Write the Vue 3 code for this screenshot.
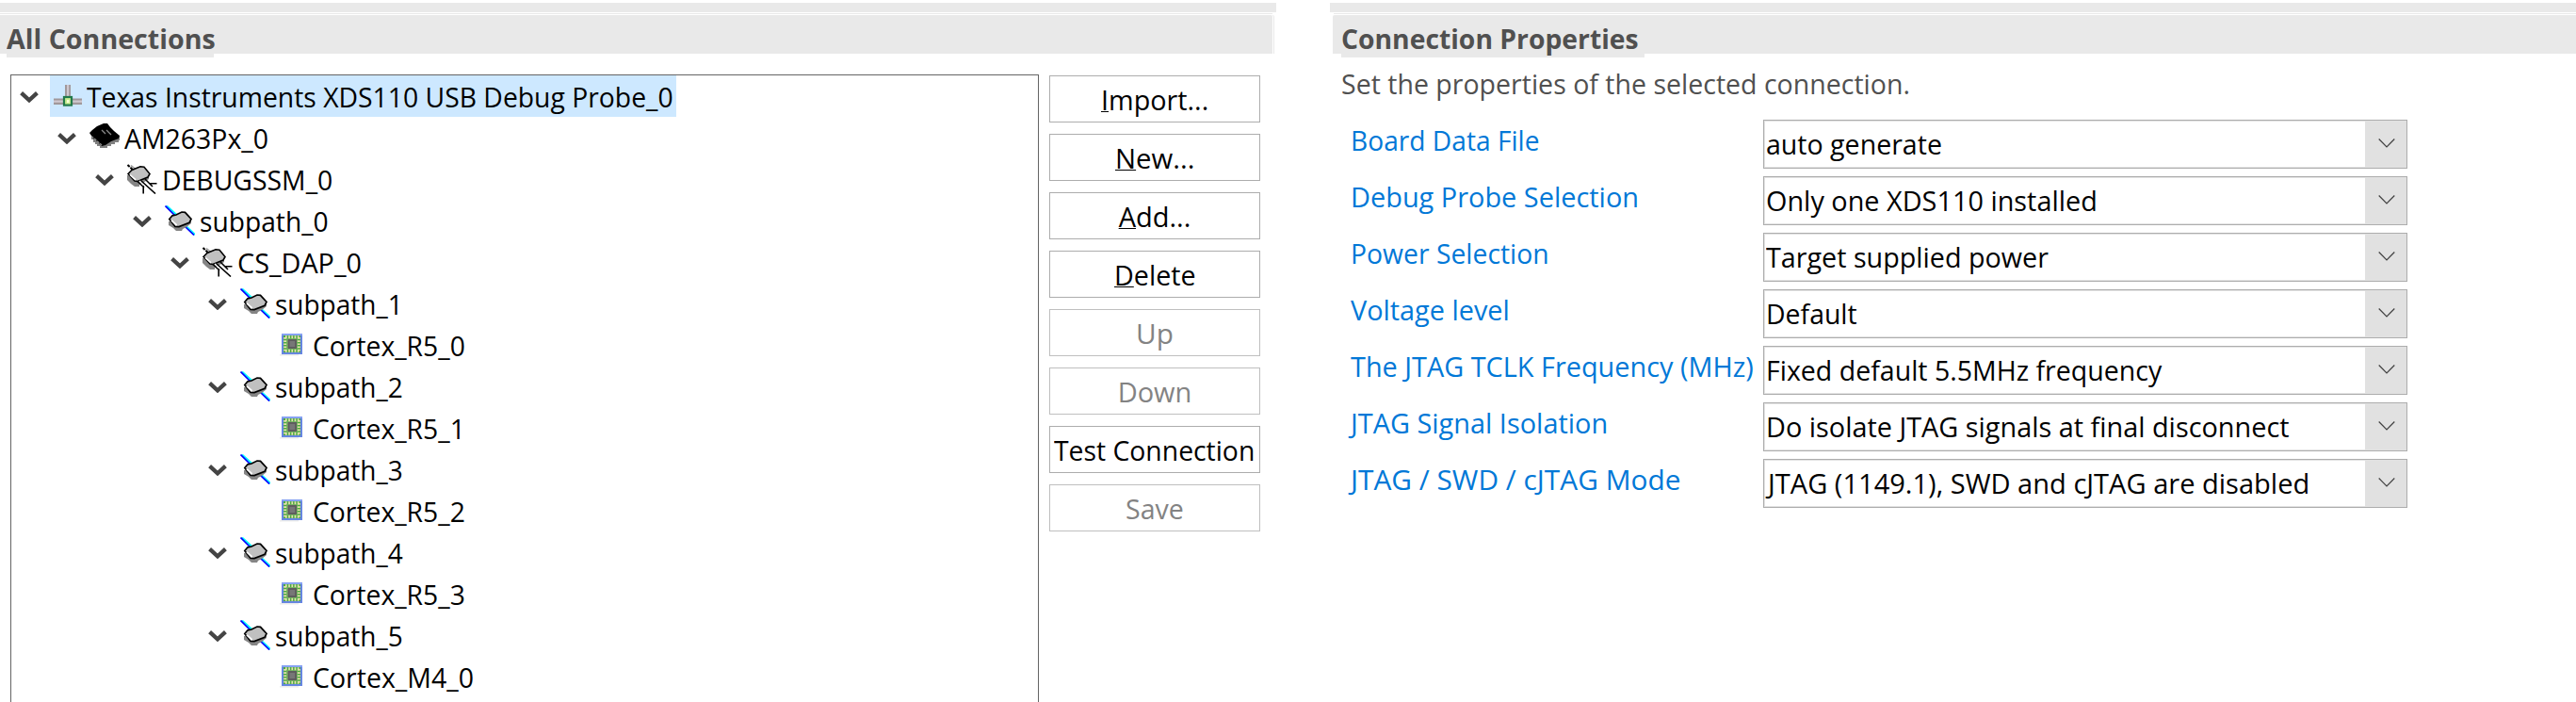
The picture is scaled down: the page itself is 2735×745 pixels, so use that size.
<script setup>
// Tree rows: label, nesting depth, icon kind and label width in pixels
const nodes = [
  { label: 'Texas Instruments XDS110 USB Debug Probe_0', depth: 0, icon: 'probe', width: 623 },
  { label: 'AM263Px_0', depth: 1, icon: 'device', width: 153 },
  { label: 'DEBUGSSM_0', depth: 2, icon: 'router', width: 181 },
  { label: 'subpath_0', depth: 3, icon: 'path', width: 137 },
  { label: 'CS_DAP_0', depth: 4, icon: 'router', width: 132 },
  { label: 'subpath_1', depth: 5, icon: 'path', width: 136 },
  { label: 'Cortex_R5_0', depth: 6, icon: 'cpu', width: 162 },
  { label: 'subpath_2', depth: 5, icon: 'path', width: 136 },
  { label: 'Cortex_R5_1', depth: 6, icon: 'cpu', width: 162 },
  { label: 'subpath_3', depth: 5, icon: 'path', width: 136 },
  { label: 'Cortex_R5_2', depth: 6, icon: 'cpu', width: 162 },
  { label: 'subpath_4', depth: 5, icon: 'path', width: 136 },
  { label: 'Cortex_R5_3', depth: 6, icon: 'cpu', width: 162 },
  { label: 'subpath_5', depth: 5, icon: 'path', width: 136 },
  { label: 'Cortex_M4_0', depth: 6, icon: 'cpu', width: 171 },
]

const buttons = [
  { key: 'I', rest: 'mport...', width: 114 },
  { key: 'N', rest: 'ew...', width: 84 },
  { key: 'A', rest: 'dd...', width: 77 },
  { key: 'D', rest: 'elete', width: 87 },
  { key: '', rest: 'Up', width: 40, disabled: true },
  { key: '', rest: 'Down', width: 79, disabled: true },
  { key: '', rest: 'Test Connection', width: 213 },
  { key: '', rest: 'Save', width: 62, disabled: true },
]

const fields = [
  { label: 'Board Data File', lw: 200, value: 'auto generate', vw: 187 },
  { label: 'Debug Probe Selection', lw: 306, value: 'Only one XDS110 installed', vw: 352 },
  { label: 'Power Selection', lw: 211, value: 'Target supplied power', vw: 300 },
  { label: 'Voltage level', lw: 169, value: 'Default', vw: 97 },
  { label: 'The JTAG TCLK Frequency (MHz)', lw: 428, value: 'Fixed default 5.5MHz frequency', vw: 420 },
  { label: 'JTAG Signal Isolation', lw: 273, value: 'Do isolate JTAG signals at final disconnect', vw: 556 },
  { label: 'JTAG / SWD / cJTAG Mode', lw: 350, value: 'JTAG (1149.1), SWD and cJTAG are disabled', vw: 575, hang: true },
]

// Condenses a label's glyphs so that it fills the given width
const vFit = {
  mounted(el, { value }) {
    const natural = el.offsetWidth
    el.style.transform = `scaleX(${value / natural})`
    el.style.marginRight = `${value - natural}px`
  },
}
</script>

<template>
  <main class="editor">
    <section class="panel connections">
      <div class="strip"></div>
      <div class="hairline"></div>
      <header class="bar"><h2 class="title"><span v-fit="222" class="text">All Connections</span></h2></header>
      <div class="body">
        <div class="tree">
          <div
            v-for="(node, i) in nodes"
            :key="node.label"
            class="row"
            :style="{ paddingLeft: node.depth * 40 + 'px' }"
          >
            <svg class="chevron" width="20" height="12" viewBox="0 0 20 12">
              <path v-if="node.icon !== 'cpu'" d="M1.6 1.6 L10 9.4 L18.4 1.6" fill="none" stroke="#444" stroke-width="4.2" />
            </svg>
            <div class="item" :class="{ selected: i === 0 }">
              <svg class="icon" width="32" height="32" viewBox="0 0 32 32">
                <g v-if="node.icon === 'probe'">
                  <path d="M14 4h6v13h-6zM2 18.5h30v6.5h-30z" fill="#a1989b" />
                  <path d="M16 4h2.2v13h-2.2zM2 20.5h30v2.2h-30z" fill="#cfc8d0" />
                  <rect x="13" y="17" width="8" height="8.6" fill="#c7ee91" stroke="#237a4b" stroke-width="2.2" />
                  <rect x="16" y="20" width="2.4" height="3" fill="#f8ffd8" />
                </g>
                <g v-else-if="node.icon === 'device'">
                  <path d="M0 12h2v6h2v3h2v2h2v2h3v2h8v-2h4v-2h4v-2h4v-2h3v-4L20 8z" fill="#808080" />
                  <path d="M0 11L3 8L8 4L15 1L19 1L22 5L26 9L32 14L31 17L23 20L17 24L13 25L8 20L4 17z" fill="#000" />
                  <path d="M2 14.5L13 24" fill="none" stroke="#8a8a8a" stroke-width="1.4" stroke-dasharray="3 1" />
                  <path d="M13 8l4 4M18 8l5 5" fill="none" stroke="#8a8a8a" stroke-width="1.3" />
                </g>
                <g v-else-if="node.icon === 'router'">
                  <path d="M0.5 1L9 9" stroke="#000" stroke-width="2" stroke-dasharray="3 1" />
                  <path d="M4 1.5L10 6.5" stroke="#999" stroke-width="1.6" />
                  <path d="M0 12v5l4 4 4 3h5v-2l4-2 6-4v-5z" fill="#858585" />
                  <path d="M1 10.5L5 6.5L14 2.8L18 3.2L24 10.5L22 14L11 18.5L8 18z" fill="#c0c0c0" stroke="#000" stroke-width="1.6" />
                  <path d="M3 11.5L9 16.8" stroke="#fff" stroke-width="1.6" />
                  <path d="M13 18L28 31.5" stroke="#fff" stroke-width="1.6" />
                  <path d="M11 18.5L18 25M15 18L30 31.5M19 16L27 24M17.2 23v8.5M24.5 20.8h7" fill="none" stroke="#000" stroke-width="1.6" />
                </g>
                <g v-else-if="node.icon === 'path'">
                  <path d="M2 0.5L12 9.5M22.5 22L32 31" stroke="#0ff" stroke-width="2" />
                  <path d="M0.5 0.5L10.5 10.5M21 22L31 31.5" stroke="#00f" stroke-width="1.7" />
                  <path d="M4 17v4l5 3 3 3h6l1-2 4-2 5-4v-5z" fill="#858585" />
                  <path d="M4.8 14.5L8 10.8L12 10L18 7L21.5 7.4L28 14.5L26 18.4L15 22.6L11 22.4z" fill="#c0c0c0" stroke="#000" stroke-width="1.7" />
                  <path d="M7 15.8L12.6 21" stroke="#fff" stroke-width="1.8" />
                </g>
                <g v-else>
                  <rect x="2" y="26" width="20" height="1.5" fill="#ececec" />
                  <rect x="4" y="4" width="22" height="22" fill="#6686e0" />
                  <rect x="4" y="4" width="22" height="2" fill="#86a2f2" />
                  <rect x="6" y="6" width="18" height="18" fill="#4dab43" />
                  <path d="M8 7.7h15M8 22.3h15M7.7 8v15M22.3 8v15" fill="none" stroke="#e6dfb0" stroke-width="3" stroke-dasharray="1.7 1.5" />
                  <rect x="9.5" y="9.5" width="11" height="11" fill="#8dbb72" />
                  <rect x="10.5" y="10" width="9.5" height="10" fill="#5e5e5e" />
                  <rect x="12.5" y="12" width="5.5" height="6" fill="#777" />
                </g>
              </svg>
              <span v-fit="node.width" class="text">{{ node.label }}</span>
            </div>
          </div>
        </div>
        <div class="buttons">
          <button v-for="b in buttons" :key="b.rest" class="btn" :disabled="b.disabled">
            <span v-fit="b.width" class="text"><span class="mnemonic">{{ b.key }}</span>{{ b.rest }}</span>
          </button>
        </div>
      </div>
    </section>

    <section class="panel properties">
      <div class="strip"></div>
      <div class="hairline"></div>
      <header class="bar"><h2 class="title"><span v-fit="316" class="text">Connection Properties</span></h2></header>
      <p class="hint"><span v-fit="604" class="text">Set the properties of the selected connection.</span></p>
      <div class="form">
        <div v-for="f in fields" :key="f.label" class="field">
          <div class="label"><span v-fit="f.lw" class="text">{{ f.label }}</span></div>
          <div class="combo">
            <div class="value" :class="{ hang: f.hang }"><span v-fit="f.vw" class="text">{{ f.value }}</span></div>
            <div class="drop">
              <svg width="18" height="10" viewBox="0 0 18 10">
                <path d="M0.7 0.5 L9 9 L17.3 0.5" fill="none" stroke="#404040" stroke-width="1.2" />
              </svg>
            </div>
          </div>
        </div>
      </div>
    </section>
  </main>
</template>

<style>
body {
  background: #fff;
  overflow: hidden;
}
</style>

<style scoped>
* {
  box-sizing: border-box;
}
.editor {
  display: flex;
  gap: 57px;
  width: 2735px;
  height: 745px;
  overflow: hidden;
  background: #fff;
  color: #000;
  font-family: 'Open Sans', 'Noto Sans', sans-serif;
  font-size: 29px;
}
.text {
  display: inline-block;
  white-space: pre;
  transform-origin: 0 50%;
}
.panel {
  padding-top: 3px;
  height: 745px;
}
.connections {
  width: 1355px;
  flex: none;
}
.properties {
  flex: 1;
}
.strip {
  height: 10px;
  background: #e9e9e9;
}
.hairline {
  height: 1px;
  margin: 1px 4px 1px 0;
  background: #e9e9e9;
}
.properties .hairline {
  margin: 1px 0 1px 4px;
}
.bar {
  height: 41px;
  width: 1351px;
  background: #e9e9e9;
  box-shadow: 1px 0 0 #fff, 2px 0 0 #e9e9e9;
  padding-left: 7px;
  border-top-right-radius: 2px;
}
.properties .bar {
  width: auto;
  margin-left: 3px;
  padding-left: 9px;
  box-shadow: none;
  border-radius: 2px 0 0 0;
}
.title {
  margin: 0;
  width: 220px;
  height: 45px;
  background: #e9e9e9;
  color: #505050;
  font-size: 29px;
  font-weight: 700;
  line-height: 50px;
  white-space: nowrap;
}
.properties .title {
  width: 322px;
}
.body {
  display: flex;
  gap: 11px;
  padding: 22px 0 0 11px;
}
.tree {
  width: 1092px;
  height: 700px;
  border: 1px solid #646464;
}
.row {
  display: flex;
  height: 44px;
}
.chevron {
  flex: none;
  margin: 17px 12px 0 9px;
}
.item {
  display: flex;
  height: 44px;
  padding: 0 3px 0 2px;
  line-height: 46px;
  white-space: nowrap;
}
.selected {
  background: #cde8ff;
}
.icon {
  flex: none;
  margin: 6px 5px 0 0;
}
.buttons {
  display: flex;
  flex-direction: column;
  gap: 12px;
  padding-top: 1px;
}
.btn {
  display: flex;
  justify-content: center;
  align-items: flex-start;
  width: 224px;
  height: 50px;
  padding: 0;
  border: 1px solid #adadad;
  background: #fff;
  color: #000;
  font: inherit;
  line-height: 50px;
}
.btn:disabled {
  border-color: #bfbfbf;
  color: #838383;
}
.mnemonic {
  text-decoration: underline;
  text-decoration-thickness: 1px;
  text-underline-offset: 1px;
  text-decoration-skip-ink: none;
}
.hint {
  margin: 10px 0 0 12px;
  height: 60px;
  line-height: 44px;
  color: #505050;
}
.form {
  display: grid;
  row-gap: 11px;
  padding-left: 22px;
}
.field {
  display: grid;
  grid-template-columns: 438px 684px;
  height: 49px;
}
.label {
  line-height: 44px;
  color: #0078d7;
  white-space: nowrap;
}
.combo {
  display: flex;
  border: 1px solid #adadad;
}
.value {
  flex: 1;
  border: 1px solid #e3e3e3;
  border-right: 0;
  padding-left: 1px;
  line-height: 48px;
  white-space: nowrap;
}
.value.hang {
  padding-left: 3px;
}
.drop {
  display: flex;
  justify-content: center;
  width: 44px;
  padding: 19px 0 0 2px;
  background: #e1e1e1;
}
</style>
